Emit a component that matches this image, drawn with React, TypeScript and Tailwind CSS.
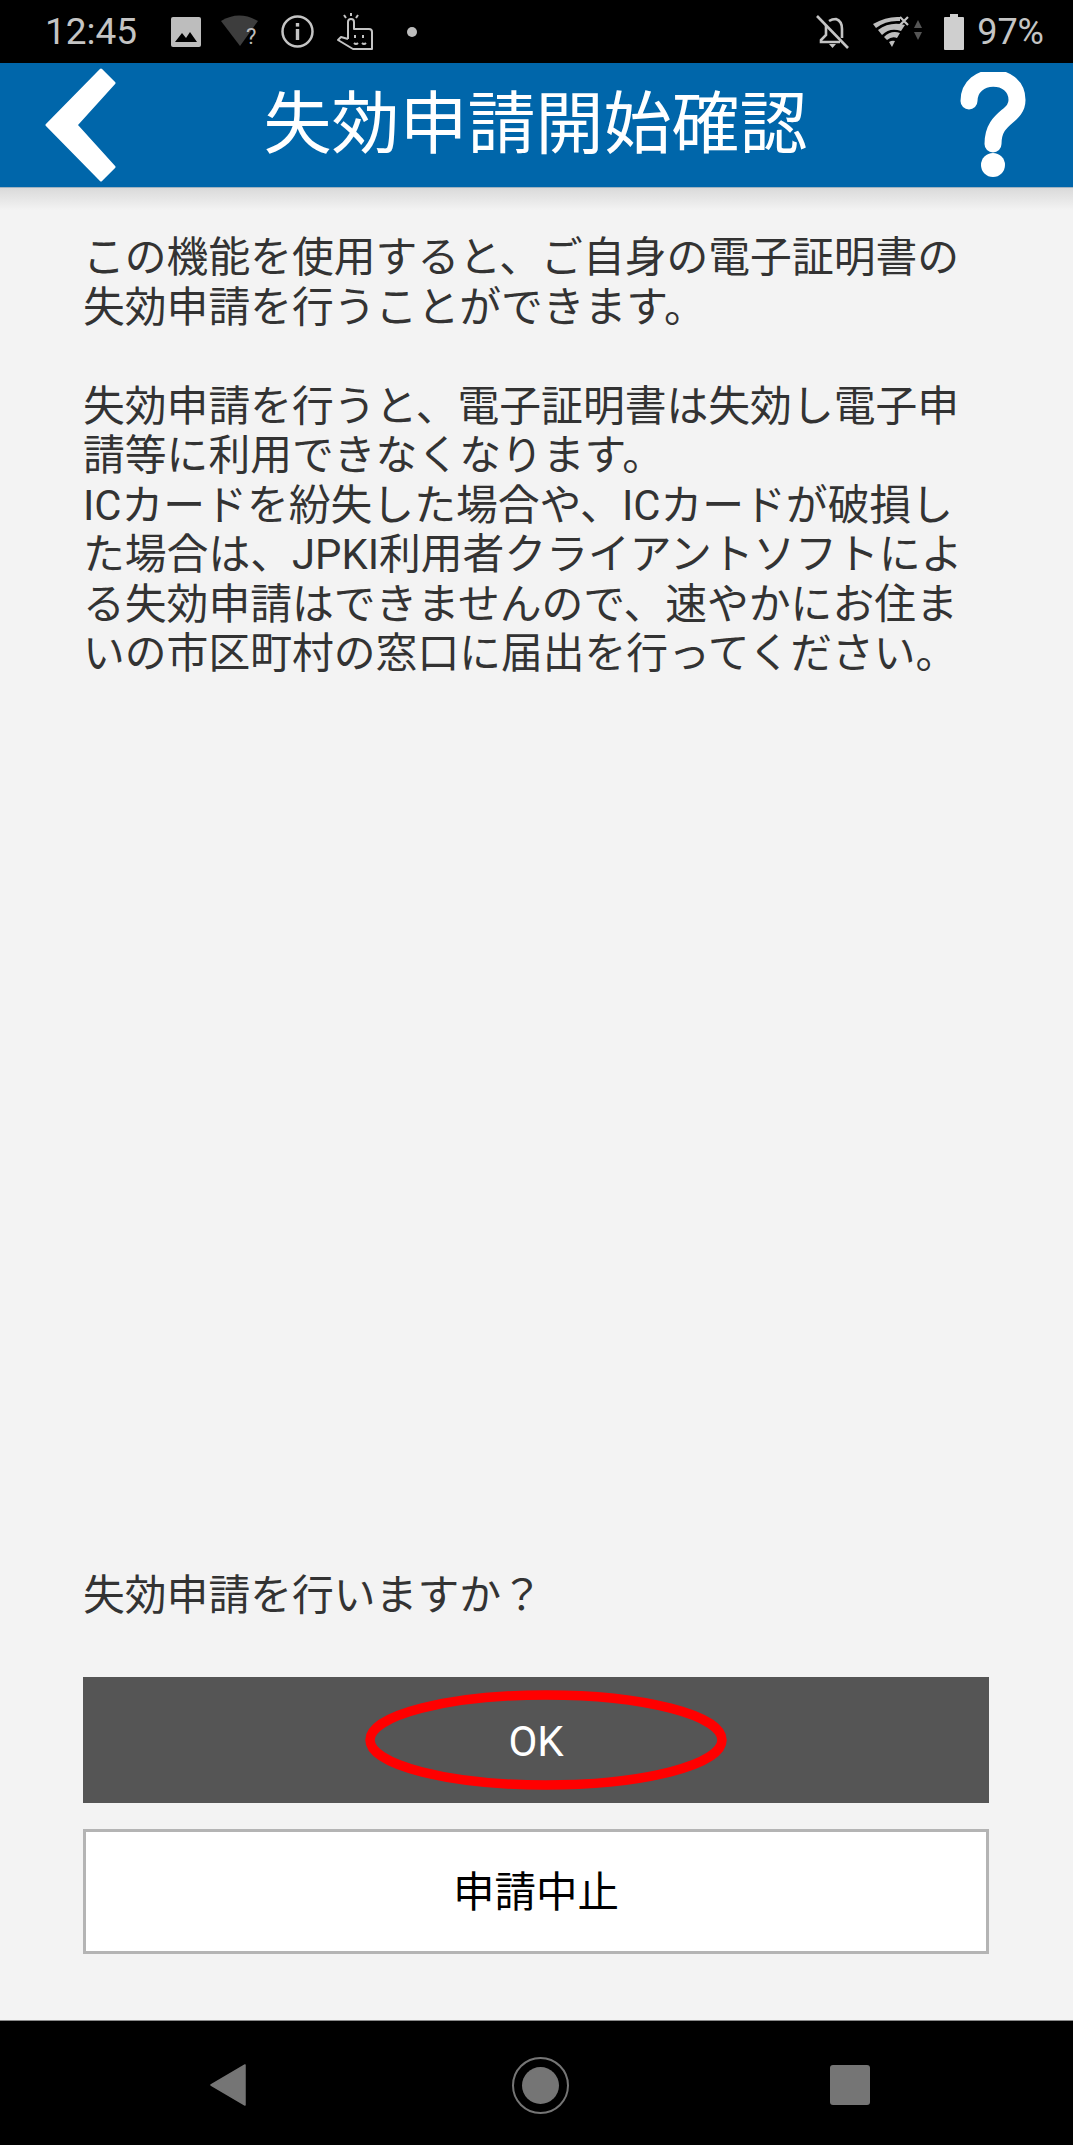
function StatusIcons() {
  return (
    <>
      <svg width="30" height="30" viewBox="0 0 30 30" className="ml-[34px]">
        <rect width="30" height="30" rx="2" fill="#bdbdbd" />
        <path d="M4 25 L11 16 L15 21 L19 15 L26 25 Z" fill="#000" />
      </svg>
      <svg width="40" height="36" viewBox="0 0 40 36" className="ml-[20px]">
        <path d="M0 7 Q18 -4 37 7 L19 32 Z" fill="#3d3d3d" />
        <text x="25" y="30" fontSize="22" fontFamily="Roboto" fill="#bdbdbd">?</text>
      </svg>
      <svg width="33" height="33" viewBox="0 0 33 33" className="ml-[20px]">
        <circle cx="16.5" cy="16.5" r="15" fill="none" stroke="#c4c4c4" strokeWidth="2.5" />
        <rect x="14.8" y="14" width="3.4" height="11" fill="#c4c4c4" />
        <rect x="14.8" y="8" width="3.4" height="3.6" fill="#c4c4c4" />
      </svg>
      <svg width="38" height="38" viewBox="0 0 38 38" className="ml-[22px]">
        <path d="M12 26 V9 a3 3 0 0 1 6 0 V16 H33 a3 3 0 0 1 3 3 V36 H17 L2 27 L5 24 L12 26" fill="none" stroke="#c4c4c4" strokeWidth="2" strokeLinejoin="round" />
        <path d="M15 0 V3 M8 2 L10 5 M22 2 L20 5" stroke="#c4c4c4" strokeWidth="2" />
        <path d="M19 22 V25 M27 22 V25 M18 30 Q20 32 22 30 M26 30 Q28 32 30 30" stroke="#c4c4c4" strokeWidth="2" fill="none" />
      </svg>
      <div className="ml-[33px] h-[10px] w-[10px] rounded-full bg-[#bdbdbd]" />
    </>
  );
}

function RightIcons() {
  return (
    <>
      <svg width="33" height="34" viewBox="0 0 33 34" fill="none">
        <path d="M1 1 L32 33" stroke="#c4c4c4" strokeWidth="2.6" />
        <path d="M10 10 V20 L5 25 V27 H24 M13 6 Q16 4 20 4 Q26 6 26 14 V23" stroke="#c4c4c4" strokeWidth="2.6" />
        <path d="M13 29 H20 L16.5 33 Z" fill="#c4c4c4" />
      </svg>
      <svg width="50" height="33" viewBox="0 0 50 33" className="ml-[24px]">
        <path d="M0 9 Q14 1 27 2 L27 6 Q13 5 3 13 Z" fill="#bdbdbd" />
        <path d="M5 15 Q17 6 32 10 L28 16 Q17 12 9 20 Z" fill="#bdbdbd" />
        <path d="M11 22 Q18 15 27 18 L24 23 Q19 21 14 25 Z" fill="#bdbdbd" />
        <path d="M16 27 Q19 25 22 26 L19 32 Z" fill="#bdbdbd" />
        <path d="M27 2 L35 10 M35 2 L27 10" stroke="#c4c4c4" strokeWidth="2.2" />
        <path d="M45 5 L49 13 H41 Z" fill="#555" />
        <path d="M41 17 H49 L45 25 Z" fill="#555" />
      </svg>
      <svg width="20" height="36" viewBox="0 0 20 36" className="ml-[21px]">
        <path d="M6 0 H14 V3 H19 a1 1 0 0 1 1 1 V35 a1 1 0 0 1 -1 1 H1 a1 1 0 0 1 -1 -1 V4 a1 1 0 0 1 1 -1 H6 Z" fill="#cfcfcf" />
      </svg>
      <span className="ml-[13px] text-[36px] leading-none text-[#c4c4c4]">97%</span>
    </>
  );
}

export default function App() {
  return (
    <div className="flex h-[2145px] w-[1073px] flex-col overflow-hidden bg-[#f3f3f3] font-[family-name:Roboto,'Noto_Sans_CJK_JP',sans-serif]">
      <div className="flex h-[63px] items-center justify-between bg-black pl-[45px] pr-[29px]">
        <div className="flex items-center">
          <span className="text-[37px] leading-none text-[#c4c4c4]">12:45</span>
          <StatusIcons />
        </div>
        <div className="flex items-center">
          <RightIcons />
        </div>
      </div>

      <header className="flex h-[125px] items-center border-b border-[#9fb3c2] bg-[#0066aa] pl-[45px] pr-[47px]">
        <svg width="72" height="116" viewBox="0 0 72 116" className="shrink-0">
          <path d="M56 3 L69 16 L31 58 L69 100 L56 113 L2 58 Z" fill="#fff" stroke="#fff" strokeWidth="3" strokeLinejoin="round" />
        </svg>
        <h1 className="flex-1 pr-[6px] text-center text-[68px] font-normal leading-none text-white">失効申請開始確認</h1>
        <svg width="66" height="106" viewBox="0 0 66 106" className="shrink-0">
          <path d="M9 29 C9 -1 57 -1 57 28 C57 46 33 44 33 72" fill="none" stroke="#fff" strokeWidth="17" strokeLinecap="round" />
          <circle cx="33" cy="93" r="12" fill="#fff" />
        </svg>
      </header>
      <div className="h-[22px] bg-gradient-to-b from-[#dadada] to-[#f3f3f3]" />

      <main className="flex flex-1 flex-col justify-between pl-[83px] pr-[84px] pb-[66px]">
        <p className="whitespace-nowrap pt-[23px] text-[41.8px] leading-[49.5px] text-[#333]">
          この機能を使用すると、ご自身の電子証明書の<br />
          失効申請を行うことができます。<br />
          <br />
          失効申請を行うと、電子証明書は失効し電子申<br />
          請等に利用できなくなります。<br />
          ICカードを紛失した場合や、ICカードが破損し<br />
          た場合は、JPKI利用者クライアントソフトによ<br />
          る失効申請はできませんので、速やかにお住ま<br />
          いの市区町村の窓口に届出を行ってください。
        </p>

        <div>
          <p className="mb-[56px] text-[41.8px] leading-[50px] text-[#333]">失効申請を行いますか？</p>
          <button className="relative flex h-[126px] w-full items-center justify-center bg-[#555555] pt-[2px] text-[42px] text-white">
            OK
            <svg width="362" height="100" viewBox="0 0 362 100" className="absolute left-[282px] top-[13px]">
              <ellipse cx="181" cy="50" rx="176" ry="45" fill="none" stroke="#ff0000" strokeWidth="9.5" />
            </svg>
          </button>
          <button className="mt-[26px] flex h-[125px] w-full items-center justify-center border-[3px] border-[#b4b4b4] bg-white pt-[3px] text-[41.5px] text-black">
            申請中止
          </button>
        </div>
      </main>

      <nav className="flex h-[125px] shrink-0 items-center border-t border-[#8a8a8a] bg-black pl-[210px] pt-[4px]">
        <svg width="36" height="42" viewBox="0 0 36 42">
          <path d="M35 1 V41 L1 21 Z" fill="#757575" stroke="#757575" strokeWidth="1.5" strokeLinejoin="round" />
        </svg>
        <div className="ml-[266px] flex h-[57px] w-[57px] items-center justify-center rounded-full border-2 border-[#757575]">
          <div className="h-[37px] w-[37px] rounded-full bg-[#757575]" />
        </div>
        <div className="ml-[261px] h-[40px] w-[40px] rounded-[3px] bg-[#757575]" />
      </nav>
    </div>
  );
}
